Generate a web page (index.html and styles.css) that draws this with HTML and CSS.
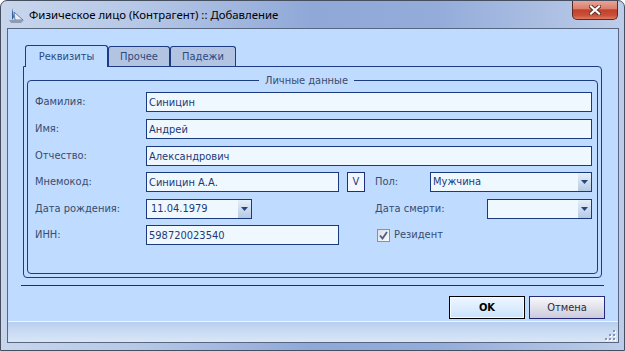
FILE: index.html
```html
<!DOCTYPE html>
<html lang="ru">
<head>
  <meta charset="UTF-8" />
  <meta name="viewport" content="width=device-width, initial-scale=1.0" />
  <title>Физическое лицо (Контрагент) :: Добавление</title>
  <link rel="stylesheet" href="styles.css">
</head>
<body>
  <div class="window">
    <!-- Title bar -->
    <div class="titlebar">
      <svg class="app-icon" viewBox="0 0 16 16">
        <path d="M3 0 L5 9 L3 12 Z" fill="#2f5fa8"/>
        <path d="M5 4 L14 12 L6 12 Z" fill="#e9eef6" stroke="#4d6b96" stroke-width="0.8"/>
        <path d="M0 12 L15 12 L12 15 L2 15 Z" fill="#8f9bb0"/>
      </svg>
      <span class="title">Физическое лицо (Контрагент) :: Добавление</span>
      <div class="close-btn">
        <svg width="12" height="10" viewBox="0 0 12 10">
          <path d="M2 1.5 L10 8.5 M10 1.5 L2 8.5" stroke="#5b2a22" stroke-width="4" stroke-linecap="square"/>
          <path d="M2 1.5 L10 8.5 M10 1.5 L2 8.5" stroke="#fff" stroke-width="2.2" stroke-linecap="square"/>
        </svg>
      </div>
    </div>

    <div class="client">
      <div class="main">
        <div class="tabs">
          <div class="tab active" style="width: 83px">Реквизиты</div>
          <div class="tab" style="width: 62px">Прочее</div>
          <div class="tab" style="width: 66px">Падежи</div>
        </div>

        <div class="tab-page">
          <fieldset class="group">
            <legend>Личные данные</legend>
            <div class="form">
              <label class="lbl">Фамилия:</label>
              <input class="field wide" type="text" value="Синицин">

              <label class="lbl">Имя:</label>
              <input class="field wide" type="text" value="Андрей">

              <label class="lbl">Отчество:</label>
              <input class="field wide" type="text" value="Александрович">

              <label class="lbl">Мнемокод:</label>
              <input class="field" type="text" value="Синицин А.А.">
              <div class="pick">V</div>
              <label class="lbl">Пол:</label>
              <div class="combo span-right">
                <span class="combo-text">Мужчина</span>
                <span class="combo-arrow"><svg width="7" height="4" viewBox="0 0 7 4"><path d="M0 0 H7 L3.5 4 Z" fill="#27467c"/></svg></span>
              </div>

              <label class="lbl">Дата рождения:</label>
              <div class="combo date">
                <span class="combo-text">11.04.1979</span>
                <span class="combo-arrow"><svg width="7" height="4" viewBox="0 0 7 4"><path d="M0 0 H7 L3.5 4 Z" fill="#27467c"/></svg></span>
              </div>
              <label class="lbl death-lbl">Дата смерти:</label>
              <div class="combo last-col">
                <span class="combo-text"></span>
                <span class="combo-arrow"><svg width="7" height="4" viewBox="0 0 7 4"><path d="M0 0 H7 L3.5 4 Z" fill="#27467c"/></svg></span>
              </div>

              <label class="lbl">ИНН:</label>
              <input class="field" type="text" value="598720023540">
              <div class="check">
                <span class="check-box">
                  <svg width="9" height="9" viewBox="0 0 9 9"><path d="M1 4.5 L3.5 7.5 L8 1" fill="none" stroke="#4a5f86" stroke-width="1.8"/></svg>
                </span>
                <span class="lbl">Резидент</span>
              </div>
            </div>
          </fieldset>
        </div>

        <div class="separator"></div>

        <div class="buttons">
          <button class="btn btn-ok">OK</button>
          <button class="btn btn-cancel">Отмена</button>
        </div>
      </div>

      <div class="statusbar">
        <svg class="grip" width="13" height="11" viewBox="0 0 13 11">
          <rect x="11" y="1" width="2" height="2" fill="#fff"/>
          <rect x="7" y="5" width="2" height="2" fill="#fff"/>
          <rect x="11" y="5" width="2" height="2" fill="#fff"/>
          <rect x="3" y="9" width="2" height="2" fill="#fff"/>
          <rect x="7" y="9" width="2" height="2" fill="#fff"/>
          <rect x="11" y="9" width="2" height="2" fill="#fff"/>
          <rect x="10" y="0" width="2" height="2" fill="#7f97c0"/>
          <rect x="6" y="4" width="2" height="2" fill="#7f97c0"/>
          <rect x="10" y="4" width="2" height="2" fill="#7f97c0"/>
          <rect x="2" y="8" width="2" height="2" fill="#7f97c0"/>
          <rect x="6" y="8" width="2" height="2" fill="#7f97c0"/>
          <rect x="10" y="8" width="2" height="2" fill="#7f97c0"/>
        </svg>
      </div>
    </div>
  </div>
</body>
</html>
```

FILE: styles.css
```css
* {
  box-sizing: border-box;
}
body {
  margin: 0;
  background: #fff;
  font-family: "DejaVu Sans Condensed", "DejaVu Sans", sans-serif;
  font-size: 11px;
}
.window {
  width: 625px;
  height: 351px;
  border: 1px solid #454f60;
  border-radius: 7px 7px 0 0;
  background: linear-gradient(90deg, #c8d6ec 0%, #b6c8e7 22%, #8fa8d8 50%, #94acda 70%, #bdcde9 100%);
  display: flex;
  flex-direction: column;
  padding-bottom: 7px;
  overflow: hidden;
}
.titlebar {
  height: 27px;
  flex-shrink: 0;
  display: flex;
  align-items: flex-start;
}
.app-icon {
  width: 16px;
  height: 16px;
  margin: 7px 4px 0 8px;
}
.title {
  font-family: "Noto Sans", "Open Sans", sans-serif;
  font-size: 11.4px;
  line-height: 27px;
  color: #000;
  white-space: nowrap;
}
.close-btn {
  margin: -1px 6px 0 auto;
  width: 46px;
  height: 20px;
  border: 1px solid #5a2a26;
  border-top: none;
  border-radius: 0 0 5px 5px;
  background: linear-gradient(#eaa99a, #d98070 45%, #c2412b 52%, #c84e38 80%, #de7a60);
  display: flex;
  align-items: center;
  justify-content: center;
}

/* client area */
.client {
  flex: 1;
  margin: 0 5px 0 6px;
  border: 1px solid #58667f;
  background: #bfdbff;
  display: flex;
  flex-direction: column;
}
.main {
  flex: 1;
  padding: 16px 16px 0 15px;
}
.tabs {
  display: flex;
  align-items: flex-end;
  height: 21px;
  margin-left: 2px;
}
.tab {
  height: 20px;
  border: 1px solid #1b3b82;
  border-bottom: none;
  border-radius: 3px 3px 0 0;
  background: #b3c4e3;
  color: #2c4a80;
  display: flex;
  align-items: center;
  justify-content: center;
}
.tab.active {
  height: 22px;
  margin-bottom: -1px;
  background: #bfdbff;
  position: relative;
  z-index: 1;
}
.tab-page {
  height: 212px;
  border: 1px solid #1b3b82;
  border-radius: 0 4px 4px 4px;
  padding: 6px 3px 3px;
  display: flex;
  flex-direction: column;
}
.group {
  flex: 1;
  margin: 0;
  min-width: 0;
  border: 1px solid #1b3b82;
  border-radius: 4px;
  padding: 4px 5px 0 7px;
}
.group legend {
  margin-left: 224px;
  padding: 0 6px;
  line-height: 15px;
  color: #3a4c6e;
}
.form {
  display: grid;
  grid-template-columns: 111px 193px 36px 55px 57px 1fr;
  grid-template-rows: 27px 27px 26px 27px 26px 20px;
  align-items: start;
}
.lbl {
  line-height: 20px;
  color: #3a4c6e;
  white-space: nowrap;
}
.field {
  width: 100%;
  height: 20px;
  border: 1px solid #1a3a80;
  background: #eff8ff;
  padding: 0 2px;
  font: inherit;
  color: #1d3a78;
  outline: none;
}
.wide {
  grid-column: 2 / 7;
}
.pick {
  margin-left: 8px;
  width: 18px;
  height: 20px;
  border: 1px solid #1e2f7e;
  background: #f2f7ff;
  color: #2b3a6e;
  line-height: 18px;
  text-align: center;
}
.combo {
  height: 20px;
  border: 1px solid #1a3a80;
  background: #eff8ff;
  color: #1d3a78;
  display: flex;
}
.combo-text {
  flex: 1;
  padding-left: 2px;
  line-height: 18px;
}
.combo-arrow {
  width: 13px;
  background: linear-gradient(#e6eff9, #b5cae5);
  display: flex;
  align-items: center;
  justify-content: center;
}
.span-right {
  grid-column: 5 / 7;
}
.date {
  width: 106px;
}
.date .combo-text {
  padding-left: 4px;
}
.death-lbl {
  grid-column: 4 / 6;
}
.last-col {
  grid-column: 6;
}
.check {
  grid-column: 4 / 7;
  margin-left: 2px;
  height: 20px;
  display: flex;
  align-items: center;
  gap: 4px;
}
.check-box {
  width: 13px;
  height: 13px;
  border: 1px solid #8e9094;
  background: linear-gradient(135deg, #dcdee2, #fbfbfc);
  display: flex;
  align-items: center;
  justify-content: center;
}
.separator {
  margin: 7px -2px 0;
  border-top: 1px solid #1a2d7c;
}
.buttons {
  display: flex;
  justify-content: flex-end;
  gap: 4px;
  margin: 10px -3px 0 0;
}
.btn {
  width: 76px;
  height: 23px;
  font: inherit;
  padding: 0;
}
.btn-ok {
  border: 1px solid #000;
  background: linear-gradient(#eef7ff, #dcedff 50%, #cbe2fb);
  box-shadow: inset 0 0 0 1px #f6fbff;
  font-weight: bold;
  color: #000;
}
.btn-cancel {
  border: 1px solid #25297a;
  background: linear-gradient(#f8f8fc, #e2e2ec 50%, #cbcbdc);
  color: #2a2a40;
}
.statusbar {
  height: 21px;
  flex-shrink: 0;
  border-top: 1px solid #eef4fc;
  background: linear-gradient(#b9cfee, #c7d9f2 40%, #d9e6f7);
  display: flex;
  justify-content: flex-end;
  align-items: flex-end;
}
.grip {
  margin: 0 2px 1px 0;
}
```
